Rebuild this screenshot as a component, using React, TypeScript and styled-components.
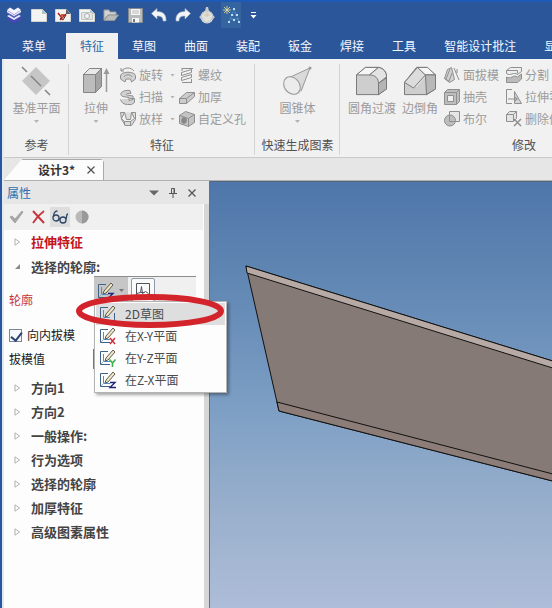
import React from "react";
import styled, { createGlobalStyle } from "styled-components";

const GlobalStyle = createGlobalStyle`
  * { box-sizing: border-box; }
  body {
    margin: 0;
    overflow: hidden;
    font-family: "Noto Sans CJK SC", "Noto Sans", sans-serif;
    font-size: 12px;
    line-height: 18px;
    color: #333;
  }
  button { font: inherit; color: inherit; margin: 0; padding: 0; border: 0; background: none; }
  svg { display: block; flex: none; }
`;

const Shell = styled.div`
  min-height: 100vh;
  display: flex;
  flex-direction: column;
  background: #2b579a;
`;

const TitleBar = styled.header`
  height: 33px;
  display: flex;
  align-items: center;
  gap: 8px;
  padding: 0 5px 5px;
  border-top: 2px solid #1e5bb8;
`;

const QuickButton = styled.button<{ $active?: boolean; $narrow?: boolean; $logo?: boolean }>`
  width: ${(p) => (p.$narrow ? "12px" : p.$logo ? "18px" : "16px")};
  height: 22px;
  display: grid;
  place-items: center;
  flex: none;
  box-shadow: ${(p) => (p.$active ? "0 0 0 2px #34659f" : "none")};
  background: ${(p) => (p.$active ? "#34659f" : "none")};
`;

const MenuTabs = styled.nav`
  height: 26px;
  display: flex;
  padding-left: 2px;
  overflow: hidden;
`;

const MenuTab = styled.button<{ $wide?: boolean; $selected?: boolean }>`
  flex: none;
  padding: 0 ${(p) => (p.$wide ? "20px" : "14px")};
  color: ${(p) => (p.$selected ? "#2b6aa8" : "#f4f8ff")};
  background: ${(p) => (p.$selected ? "#f1f1f1" : "transparent")};
`;

const Client = styled.div`
  flex: 1;
  display: flex;
  flex-direction: column;
  margin-left: 2px;
  border-left: 2px solid #dcebf7;
  background: #e6e6e6;
`;

const Ribbon = styled.section`
  height: 99px;
  display: flex;
  overflow: hidden;
  background: #f1f1f1;
  border-bottom: 1px solid #c9c9c9;
`;

const Group = styled.div<{ $width: number }>`
  flex: 0 0 ${(p) => p.$width}px;
  display: flex;
  flex-direction: column;
  justify-content: space-between;
  padding: 4px 0 3px;
  background: linear-gradient(#d4d4d4, #d4d4d4) right 5px / 1px 91px no-repeat;
`;

const GroupBody = styled.div<{ $indent?: number; $gap?: number }>`
  display: flex;
  justify-content: ${(p) => (p.$indent ? "flex-start" : "center")};
  gap: ${(p) => p.$gap || 6}px;
  padding-left: ${(p) => p.$indent || 0}px;
`;

const GroupLabel = styled.div`
  text-align: center;
  color: #505050;
`;

const LargeButton = styled.button`
  display: flex;
  flex-direction: column;
  align-items: center;
  color: #9b9b9b;
  padding-top: 3px;
  white-space: nowrap;
`;

const LargeLabel = styled.span`
  margin-top: 3px;
`;

const SmallColumns = styled.div<{ $gap: number }>`
  display: flex;
  gap: ${(p) => p.$gap}px;
`;

const SmallColumn = styled.div`
  display: flex;
  flex-direction: column;
  gap: 4px;
  padding-top: 3px;
`;

const SmallButton = styled.button`
  display: flex;
  align-items: center;
  gap: 3px;
  height: 18px;
  color: #9b9b9b;
  white-space: nowrap;
`;

const Caret = styled.i<{ $color?: string }>`
  display: block;
  width: 5px;
  height: 3px;
  background: ${(p) => p.$color || "#b4b4b4"};
  clip-path: polygon(0 0, 100% 0, 50% 100%);
  margin: 3px 4px;
`;

const DocTabs = styled.div`
  height: 23px;
  display: flex;
  align-items: flex-end;
  border-bottom: 1px solid #b0b0b0;
`;

const DocTab = styled.div`
  display: flex;
  height: 21px;
  background: linear-gradient(#a9a9a9, #a9a9a9) right top / calc(100% - 18px) 1px no-repeat, #fcfcfc;
  clip-path: polygon(18px 0, 97% 0, 100% 3px, 100% 100%, 0 100%);
  border-right: 1px solid #a9a9a9;
`;

const DocTitle = styled.button`
  padding: 0 11px 0 34px;
  font-weight: 700;
`;

const DocClose = styled.button`
  width: 17px;
  display: grid;
  place-items: center start;
  padding-left: 1px;
`;

const Workspace = styled.main`
  flex: 1;
  display: flex;
`;

const Panel = styled.aside`
  flex: 0 0 206px;
  position: relative;
  z-index: 1;
  display: flex;
  flex-direction: column;
  background: #fdfdfd;
  border-right: 1px solid #68717c;
  box-shadow: inset -5px 0 #d6d6d6;
`;

const PanelHeader = styled.div`
  height: 23px;
  display: flex;
  align-items: center;
  justify-content: space-between;
  padding: 0 12px 0 3px;
  background: #e6e6e6;
`;

const PanelTitle = styled.h2`
  margin: 0;
  font-size: 12px;
  font-weight: 400;
  color: #2a6fb0;
`;

const HeaderButtons = styled.div`
  display: flex;
  gap: 9px;
`;

const HeaderButton = styled.button`
  width: 10px;
  height: 14px;
  display: grid;
  place-items: center;
`;

const PanelTools = styled.div`
  height: 26px;
  display: flex;
  align-items: center;
  gap: 2px;
  padding: 0 2px;
  margin-right: 6px;
  background: #f0f0f0;
`;

const PanelTool = styled.button<{ $pressed?: boolean }>`
  width: 20px;
  height: 20px;
  display: grid;
  place-items: center;
  background: ${(p) => (p.$pressed ? "#dedede" : "none")};
`;

const Section = styled.button<{ $accent?: boolean; $open?: boolean }>`
  height: ${(p) => (p.$open ? "22px" : "24px")};
  display: flex;
  align-items: ${(p) => (p.$open ? "flex-end" : "center")};
  gap: 9px;
  padding-left: 9px;
  font-size: 13px;
  font-weight: 700;
  color: ${(p) => (p.$accent ? "#c4141c" : "#444")};
`;

const Twisty = styled.span`
  width: 9px;
  height: 18px;
  display: grid;
  place-items: center;
`;

const ProfileRow = styled.div`
  height: 47px;
  display: grid;
  grid-template-columns: 85px 1fr;
  padding: 0 13px 0 5px;
`;

const ProfileLabel = styled.span`
  align-self: center;
  color: #c8323a;
`;

const ProfileTools = styled.div`
  position: relative;
  height: 28px;
  display: flex;
  gap: 3px;
  background: #f0f0f0;
  border-top: 1px solid #8c8c8c;
`;

const SketchButton = styled.button`
  width: 34px;
  display: flex;
  align-items: center;
  padding-left: 3px;
  background: #c6c6c6;
`;

const ImportButton = styled.button`
  width: 24px;
  height: 24px;
  margin-top: 1px;
  display: grid;
  place-items: center;
  border: 1px solid #8f9bab;
  border-radius: 2px;
  background: #fafafa;
`;

const Popup = styled.div`
  position: absolute;
  top: 24px;
  left: 0;
  width: 133px;
  padding: 1px;
  background: #fdfdfd;
  border: 1px solid #b3b3b3;
  box-shadow: 2px 2px 3px rgba(0, 0, 0, 0.35);
`;

const PopupItem = styled.button<{ $hot?: boolean }>`
  width: 100%;
  height: 22px;
  display: flex;
  align-items: center;
  gap: 8px;
  padding-left: 3px;
  color: #4a4a4a;
  background: ${(p) => (p.$hot ? "#dedede" : "none")};
`;

const Highlight = styled.svg`
  position: absolute;
  top: 16px;
  left: -19px;
  pointer-events: none;
`;

const CheckRow = styled.label`
  height: 24px;
  display: flex;
  align-items: center;
  gap: 5px;
  padding-left: 5px;
  color: #222;
`;

const CheckBox = styled.input`
  appearance: none;
  width: 13px;
  height: 13px;
  margin: 0;
  border: 1px solid #7b8794;
  background: #f6f8fb;
  &:checked::before {
    content: "";
    display: block;
    width: 5px;
    height: 9px;
    margin: 0 3px;
    border: solid #2d4372;
    border-width: 0 2px 2px 0;
    transform: rotate(38deg);
  }
`;

const ValueRow = styled.div`
  height: 24px;
  display: grid;
  grid-template-columns: 84px 1fr;
  align-items: center;
  padding: 0 13px 0 5px;
  margin-bottom: 5px;
  color: #222;
`;

const ValueInput = styled.input`
  width: 100%;
  height: 20px;
  border: 1px solid #777;
  font: inherit;
`;

const Viewport = styled.section`
  flex: 1;
  min-width: 0;
  display: flex;
  background: linear-gradient(#4f76aa, #6288b4 25%, #7c9ec4 52%, #98afcc 76%, #aebdd8);
  border-top: 1px solid #55667c;
`;

const Scene = styled.svg`
  flex: 1 1 0;
  width: 100%;
  height: 100%;
  min-width: 0;
`;

const line = { fill: "none", stroke: "#8f8f8f", strokeWidth: 1 };

const CloseIcon = () => (
  <svg width="8" height="8" viewBox="0 0 8 8" stroke="#555" strokeWidth="1.3">
    <path d="M.5 .5l7 7M7.5 .5l-7 7" />
  </svg>
);

const Logo = () => (
  <svg width="16" height="18" viewBox="0 0 16 18">
    <path d="M1 10v3l7 4.500 7-4.500v-3l-7 4z" fill="#4a46b4" />
    <path d="M1 10l2-1 5 3 5-3 2 1-7 4z" fill="#e9ebff" />
    <path d="M1 4v3l7 4.500L15 7V4L8 8z" fill="#6a68cc" />
    <path d="M1 4l3-2.500L8 4l4-2.500L15 4 8 8.500z" fill="#f3f4ff" />
    <path d="M1 4.500L8 9l7-4.500V6l-7 4-7-4z" fill="#fff" />
  </svg>
);

const Page = ({ dark, children }: { dark?: boolean; children?: React.ReactNode }) => (
  <svg width="16" height="14" viewBox="0 0 16 14">
    <path d="M.5 1.500h11l4 4v8H.5z" fill="#f3f3f1" stroke="#d3d3cf" />
    <path d="M11 1v5h5z" fill={dark ? "#59606a" : "#b3c4c2"} />
    {children}
  </svg>
);

const OpenIcon = () => (
  <svg width="16" height="14" viewBox="0 0 16 14">
    <path d="M1 12V2h5l1 2h6v3H5z" fill="#d2d3d3" stroke="#9a9e9f" />
    <path d="M1 12.500L5 7h10.500l-4 5.500z" fill="#babcbc" stroke="#8f9495" />
  </svg>
);

const SaveIcon = () => (
  <svg width="15" height="15" viewBox="0 0 15 15">
    <path d="M.5 .5h14v14H.5z" fill="#b9bcbd" stroke="#858a8e" />
    <path d="M3 1h9v6H3zM4 10h7v4.500H4z" fill="#f5f5f5" />
    <path d="M4 3h7M4 5h7" stroke="#bbb" />
    <path d="M6 11v3" stroke="#777" strokeWidth="2" />
  </svg>
);

const UndoIcon = ({ flip }: { flip?: boolean }) => (
  <svg width="16" height="14" viewBox="0 0 16 14">
    <path
      transform={flip ? "matrix(-1 0 0 1 16 0)" : undefined}
      d="M.5 5.500L6 .5v3c6 0 9.500 3 9 9.500h-3c0-4-2-5-6-5v3z"
      fill="#f2f4f6"
      stroke="#a7b2c2"
      strokeWidth=".6"
    />
  </svg>
);

const BallIcon = () => (
  <svg width="16" height="17" viewBox="0 0 16 17">
    <circle cx="8" cy="10" r="6.500" fill="#dde1e2" />
    <path d="M7 0h2l1 4H6zM0 10l3-2v5zM16 10l-3-2v5z" fill="#c7cbd0" />
    <path d="M5 5h6l3 4-2 4-4 3-4-3-2-4z" fill="#e2e2dc" stroke="#b5babb" strokeWidth=".7" />
    <path d="M5 8h6M8 6v4" stroke="#cfc4a8" />
  </svg>
);

const StructureIcon = () => (
  <svg width="18" height="18" viewBox="0 0 18 18">
    <path d="M4 0v8M0 4h8M1 1l6 6M7 1L1 7" stroke="#ece19b" strokeWidth=".8" />
    <path d="M11 3L6 16M11 3l5 13M9 9h5M8 13h8" stroke="#5b93cf" strokeDasharray="2 1" fill="none" />
    <path
      d="M10 2h2v2h-2zM8 8h2v2H8zM13 8h2v2h-2zM5 15h2v2H5zM10 13h2v2h-2zM15 15h2v2h-2z"
      fill="#b9dcf8"
    />
  </svg>
);

const MoreIcon = () => (
  <svg width="7" height="7" viewBox="0 0 7 7">
    <path d="M1 .5h5" stroke="#fff" />
    <path d="M.5 3h6l-3 3.500z" fill="#fff" />
  </svg>
);

const PlaneIcon = () => (
  <svg width="30" height="30" viewBox="0 0 30 30">
    <path d="M15 1l14 14-14 14L1 15z" fill="#c6c6c6" />
    <path d="M1 1l5 5M10 10l10 10M24 24l5 5" stroke="#858585" strokeWidth="1.500" />
  </svg>
);

const ExtrudeIcon = () => (
  <svg width="28" height="30" viewBox="0 0 28 30">
    <path d="M1.500 8.500l6-6h12v18l-6 6h-12z" fill="#bcbcbc" stroke="#858585" />
    <path d="M1.500 8.500l6-6h12l-6 6z" fill="#e8e8e8" stroke="#858585" />
    <path d="M13.500 8.500v18l6-6v-18z" fill="#a4a4a4" stroke="#858585" />
    <path d="M24.500 26V6" stroke="#999" strokeWidth="1.500" />
    <path d="M21.500 8l3-6 3 6z" fill="#999" />
  </svg>
);

const ConeIcon = () => (
  <svg width="30" height="30" viewBox="0 0 30 30">
    <path d="M3 14L28 2 20 25a9 8 0 0 1-17-11z" fill="#dadada" />
    <path d="M4 13L28 2 19 25" fill="none" stroke="#999" />
    <ellipse cx="10" cy="19.500" rx="7.500" ry="9.500" transform="rotate(-38 10 19.500)" fill="#ececec" stroke="#999" />
    <circle cx="28" cy="2" r="1.500" fill="#999" />
  </svg>
);

const RoundEdgeIcon = () => (
  <svg width="34" height="30" viewBox="0 0 34 32" preserveAspectRatio="none">
    <path d="M1.500 9.500l9-8h13c6 1 8 5 8 11v12l-8 6h-22z" fill="#cecece" stroke="#777" />
    <path d="M1.500 9.500l9-8h13l-9 8z" fill="#f7f7f7" stroke="#777" />
    <path d="M14.500 9.500l9-8c5 1 8 5 8 10l-8 7c0-5-3-9-9-9z" fill="#e3e3e3" stroke="#777" />
    <path d="M23.500 18.500v12l8-6v-12z" fill="#b5b5b5" stroke="#777" />
  </svg>
);

const ChamferIcon = () => (
  <svg width="34" height="30" viewBox="0 0 34 32" preserveAspectRatio="none">
    <path d="M1.500 17.500l12-16h10l9 8v15l-9 6h-22z" fill="#cecece" stroke="#777" />
    <path d="M1.500 17.500l13-16h7l9 8h-6.500l-10 13z" fill="#dedede" stroke="none" />
    <path d="M1.500 17.500l13-16 8 8-12 14z" fill="#dcdcdc" stroke="#777" />
    <path d="M14.500 1.500h10l8 8h-10z" fill="#f7f7f7" stroke="#777" />
    <path d="M22.500 9.500h10v15l-9 6z" fill="#b8b8b8" stroke="#777" />
  </svg>
);

type SmallKind =
  | "revolve" | "sweep" | "loft" | "thread" | "thicken" | "hole"
  | "draft" | "shell" | "boolean" | "split" | "stretch" | "remove";

const smallArt: Record<SmallKind, React.ReactNode> = {
  revolve: (
    <>
      <path d="M1 4c4-4 10-4 13 0M1 1v3h3" />
      <path d="M.5 9c0-5 15-5 15 0v3l-4 3-1-3H6l-1 3-4.500-3z" fill="#d2d2d2" />
      <path d="M4 10c1-3 7-3 8 0" />
    </>
  ),
  sweep: (
    <path
      d="M10 1.500c-8-1-12 4-7 6l6 1v3l4-1V7l-6-1c-2-1 0-2 4-1.500zM9.500 9.500h5v4l-3 2h-4c-4 0-6-2-7-5"
      fill="#d2d2d2"
    />
  ),
  loft: (
    <path
      d="M.5 1.500h4l2 7h4l1-7h4v7l-4 6h-6l-4-6zM4.500 1.500l-3 6 3 3h6l4-3-3-6M4.500 10.500v4M10.500 10.500v4"
      fill="#dcdcdc"
    />
  ),
  thread: <path d="M3 1.500h11M3 15.500h10M2.500 5.500l10-3v3l-10 3zM2.500 10.500l10-3v3l-10 3zM12.500 12v3M3 1v3" fill="#f4f4f4" />,
  thicken: (
    <>
      <path d="M.5 9.500l7-6h8v4l-8 7h-7z" fill="#ccc" />
      <path d="M.5 9.500h7l8-6M7.500 9.500v5" />
    </>
  ),
  hole: (
    <>
      <path d="M.5 4.500l6-4 9 3v8l-6 4-9-3z" fill="#c4c4c4" />
      <path d="M.5 4.500l9 3 6-4M9.500 7.500v8" />
      <ellipse cx="5" cy="9.500" rx="2.500" ry="3" fill="#888" />
    </>
  ),
  draft: (
    <>
      <path d="M.5 11.500l3-9 4-2 3 12-5 3z" fill="#d2d2d2" />
      <path d="M2 12l4-10M5 14l3-8M.5 11.500l5 3M10 1l5 12M13 2v4" />
    </>
  ),
  shell: (
    <>
      <path d="M.5 3.500l3-3h12v12l-3 3H.5z" fill="#bdbdbd" />
      <path d="M.5 3.500h12v12M12.500 3.500l3-3" />
      <path d="M3.500 6.500h6v6h-6z" fill="#eee" />
    </>
  ),
  boolean: (
    <>
      <path d="M5.500 .5h10v10h-10z" fill="#e6e6e6" />
      <circle cx="6" cy="9.500" r="5.500" fill="#bdbdbd" />
      <path d="M5.500 4v6.500h6" />
    </>
  ),
  split: (
    <>
      <path d="M.5 3.500l4-3h11v4l-4 3c-4-3-7 2-11-1z" fill="#eee" />
      <path d="M.5 10c4 3 7-3 11 0l4-3v5l-4 3.500H.5z" fill="#bbb" />
      <path d="M.5 3.500h11v3" />
    </>
  ),
  stretch: (
    <>
      <path d="M6 .5H.5v14H6" />
      <path d="M8.500 14.500V2.500l7 12z" fill="#d5d5d5" />
      <path d="M2 10h9M9 8l2.500 2L9 12" />
    </>
  ),
  remove: (
    <>
      <path d="M.5 3.500l3-3h7v7l-3 3h-7zM.5 3.500h7v7M7.500 3.500l3-3" fill="#e5e5e5" />
      <path d="M8 8l7 7M15 8l-7 7" strokeWidth="1.500" />
    </>
  ),
};

const Small = ({ kind, text, menu }: { kind: SmallKind; text: string; menu?: boolean }) => (
  <SmallButton>
    <svg width="16" height="16" viewBox="0 0 16 16" {...line}>{smallArt[kind]}</svg>
    <span>{text}</span>
    {menu && <Caret />}
  </SmallButton>
);

const SketchIcon = ({ axis }: { axis?: "x" | "y" | "z" }) => (
  <svg width="18" height="18" viewBox="0 0 18 18" fill="none">
    <path d="M9 2.500H1.500v13H11" stroke="#3f6286" />
    {!axis && <path d="M11 15.500h4.500V8" stroke="#3f6286" />}
    <path d="M4.500 5v7.500H11" stroke="#4f8fc0" />
    <path d="M2 15l3-3" stroke="#8fb7d8" />
    <path d="M6 12l1-3 7-8 2 2-7 8z" fill="#f0e6bf" stroke="#5c5c55" />
    {axis === "x" && <path d="M11 11l5 6M16 11l-5 6" stroke="#d02a35" strokeWidth="1.400" />}
    {axis === "y" && <path d="M10.500 10.500l3 3.500 3-3.500M13.500 14v4" stroke="#3fae4c" strokeWidth="1.600" />}
    {axis === "z" && <path d="M11 11.500h5l-5 5h6" stroke="#23237c" strokeWidth="1.400" />}
  </svg>
);

const Arrow = ({ open }: { open?: boolean }) => (
  <Twisty>
    <svg width="7" height="8" viewBox="0 0 7 8">
      {open ? <path d="M6 1v5H1z" fill="#8a8a8a" /> : <path d="M1 .8v6.400L5.500 4z" fill="#fff" stroke="#b0b0b0" />}
    </svg>
  </Twisty>
);

const menuTabs = ["菜单", "特征", "草图", "曲面", "装配", "钣金", "焊接", "工具", "智能设计批注", "显示"];
const sections = ["方向1", "方向2", "一般操作:", "行为选项", "选择的轮廓", "加厚特征", "高级图素属性"];
const planes: { text: string; axis?: "x" | "y" | "z" }[] = [
  { text: "2D草图" },
  { text: "在X-Y平面", axis: "x" },
  { text: "在Y-Z平面", axis: "y" },
  { text: "在Z-X平面", axis: "z" },
];

export default function App() {
  return (
    <Shell>
      <GlobalStyle />
      <TitleBar>
        <QuickButton $logo aria-label="应用程序"><Logo /></QuickButton>
        <QuickButton aria-label="新建"><Page /></QuickButton>
        <QuickButton aria-label="新建设计">
          <Page dark>
            <path d="M3 5l4 5M11 6l-6 6M6 7h5" stroke="#b82c22" strokeWidth="1.600" fill="none" />
            <path d="M5 10l3 2 3-5" stroke="#5b2a26" fill="none" />
          </Page>
        </QuickButton>
        <QuickButton aria-label="新建图纸">
          <Page>
            <path d="M2.500 4.500h11v7h-11z" fill="#e3e6e5" stroke="#bfc6c4" />
            <circle cx="8" cy="8" r="2.500" fill="#f4f4f4" stroke="#a9b1b0" />
          </Page>
        </QuickButton>
        <QuickButton aria-label="打开"><OpenIcon /></QuickButton>
        <QuickButton aria-label="保存"><SaveIcon /></QuickButton>
        <QuickButton aria-label="撤销"><UndoIcon /></QuickButton>
        <QuickButton aria-label="重做"><UndoIcon flip /></QuickButton>
        <QuickButton aria-label="三维球"><BallIcon /></QuickButton>
        <QuickButton $active aria-label="设计树"><StructureIcon /></QuickButton>
        <QuickButton $narrow aria-label="更多"><MoreIcon /></QuickButton>
      </TitleBar>
      <MenuTabs>
        {menuTabs.map((t, i) => (
          <MenuTab key={t} $wide={i === 0} $selected={i === 1}>{t}</MenuTab>
        ))}
      </MenuTabs>
      <Client>
        <Ribbon>
          <Group $width={65}>
            <GroupBody>
              <LargeButton><PlaneIcon /><LargeLabel>基准平面</LargeLabel><Caret /></LargeButton>
            </GroupBody>
            <GroupLabel>参考</GroupLabel>
          </Group>
          <Group $width={186}>
            <GroupBody $indent={13} $gap={10}>
              <LargeButton><ExtrudeIcon /><LargeLabel>拉伸</LargeLabel><Caret /></LargeButton>
              <SmallColumns $gap={0}>
                <SmallColumn>
                  <Small kind="revolve" text="旋转" menu />
                  <Small kind="sweep" text="扫描" menu />
                  <Small kind="loft" text="放样" menu />
                </SmallColumn>
                <SmallColumn>
                  <Small kind="thread" text="螺纹" />
                  <Small kind="thicken" text="加厚" />
                  <Small kind="hole" text="自定义孔" />
                </SmallColumn>
              </SmallColumns>
            </GroupBody>
            <GroupLabel>特征</GroupLabel>
          </Group>
          <Group $width={85}>
            <GroupBody>
              <LargeButton><ConeIcon /><LargeLabel>圆锥体</LargeLabel><Caret /></LargeButton>
            </GroupBody>
            <GroupLabel>快速生成图素</GroupLabel>
          </Group>
          <Group $width={368}>
            <GroupBody $indent={8}>
              <LargeButton><RoundEdgeIcon /><LargeLabel>圆角过渡</LargeLabel></LargeButton>
              <LargeButton><ChamferIcon /><LargeLabel>边倒角</LargeLabel></LargeButton>
              <SmallColumns $gap={7}>
                <SmallColumn>
                  <Small kind="draft" text="面拔模" />
                  <Small kind="shell" text="抽壳" />
                  <Small kind="boolean" text="布尔" />
                </SmallColumn>
                <SmallColumn>
                  <Small kind="split" text="分割" />
                  <Small kind="stretch" text="拉伸零件" />
                  <Small kind="remove" text="删除体" />
                </SmallColumn>
              </SmallColumns>
            </GroupBody>
            <GroupLabel>修改</GroupLabel>
          </Group>
        </Ribbon>
        <DocTabs>
          <DocTab>
            <DocTitle>设计3*</DocTitle>
            <DocClose aria-label="关闭"><CloseIcon /></DocClose>
          </DocTab>
        </DocTabs>
        <Workspace>
          <Panel>
            <PanelHeader>
              <PanelTitle>属性</PanelTitle>
              <HeaderButtons>
                <HeaderButton aria-label="选项">
                  <svg width="10" height="6" viewBox="0 0 10 6"><path d="M0 .5h10L5 5.500z" fill="#666" /></svg>
                </HeaderButton>
                <HeaderButton aria-label="固定">
                  <svg width="8" height="10" viewBox="0 0 8 10" fill="none" stroke="#555">
                    <path d="M2.500 5.500v-5h3v5M5 1v4M0 5.500h8M4 6v4" />
                  </svg>
                </HeaderButton>
                <HeaderButton aria-label="关闭"><CloseIcon /></HeaderButton>
              </HeaderButtons>
            </PanelHeader>
            <PanelTools>
              <PanelTool aria-label="确定">
                <svg width="15" height="14" viewBox="0 0 15 14">
                  <path d="M1 7l2-1 3 3 7-8 1 1-8 11z" fill="#a6a6a6" stroke="#a6a6a6" />
                </svg>
              </PanelTool>
              <PanelTool aria-label="取消">
                <svg width="13" height="14" viewBox="0 0 13 14" stroke="#c5373c" fill="none">
                  <path d="M1 1l11 12" strokeWidth="2" />
                  <path d="M12 1C8 4 4 8 1 13" strokeWidth="1.800" />
                </svg>
              </PanelTool>
              <PanelTool $pressed aria-label="预览">
                <svg width="17" height="14" viewBox="0 0 17 14" stroke="#2c4566" fill="none" strokeWidth="1.300">
                  <circle cx="4" cy="8" r="3" />
                  <circle cx="11" cy="10" r="3" />
                  <path d="M1.500 7c0-3 1-6 4-6M7 9h1M14 9c1-2 0-5 2-5" />
                </svg>
              </PanelTool>
              <PanelTool aria-label="显示">
                <svg width="14" height="14" viewBox="0 0 14 14">
                  <circle cx="7" cy="7" r="6.500" fill="#b9b9b9" />
                  <path d="M7 .5a6.500 6.500 0 0 1 0 13z" fill="#999" />
                </svg>
              </PanelTool>
            </PanelTools>
            <Section $accent><Arrow />拉伸特征</Section>
            <Section $open aria-expanded="true"><Arrow open />选择的轮廓:</Section>
            <ProfileRow>
              <ProfileLabel>轮廓</ProfileLabel>
              <ProfileTools>
                <SketchButton aria-label="草图平面" aria-haspopup="menu">
                  <SketchIcon axis="z" />
                  <Caret $color="#777" />
                </SketchButton>
                <ImportButton aria-label="导入草图">
                  <svg width="16" height="16" viewBox="0 0 16 16" fill="none" stroke="#4d5560">
                    <path d="M1.500 1.500h13v12h-13z" />
                    <path d="M1.500 11.500l4-1 1-6 1 7 3-2 3 2M5.500 10.500h4" />
                  </svg>
                </ImportButton>
                <Popup role="menu">
                  {planes.map((p, i) => (
                    <PopupItem key={p.text} role="menuitem" $hot={i === 0}>
                      <SketchIcon axis={p.axis} />
                      {p.text}
                    </PopupItem>
                  ))}
                </Popup>
                <Highlight width="150" height="36" viewBox="0 0 150 36">
                  <ellipse cx="75" cy="18" rx="71" ry="14" fill="none" stroke="#d3242b" strokeWidth="6" />
                </Highlight>
              </ProfileTools>
            </ProfileRow>
            <CheckRow><CheckBox type="checkbox" defaultChecked />向内拔模</CheckRow>
            <ValueRow>
              <label htmlFor="draft-value">拔模值</label>
              <ValueInput id="draft-value" />
            </ValueRow>
            {sections.map((s) => (
              <Section key={s}><Arrow />{s}</Section>
            ))}
          </Panel>
          <Viewport>
            <Scene viewBox="0 0 342 427" preserveAspectRatio="xMinYMin slice" stroke="#111" strokeWidth="1" strokeLinejoin="round">
              <path d="M36 84L362 185V304L69 229z" fill="#867a76" />
              <path d="M36 84L362 185v7L37 91z" fill="#b7aaa5" />
              <path d="M67 220L362 297v7L69 229z" fill="#8c7d78" />
            </Scene>
          </Viewport>
        </Workspace>
      </Client>
    </Shell>
  );
}
